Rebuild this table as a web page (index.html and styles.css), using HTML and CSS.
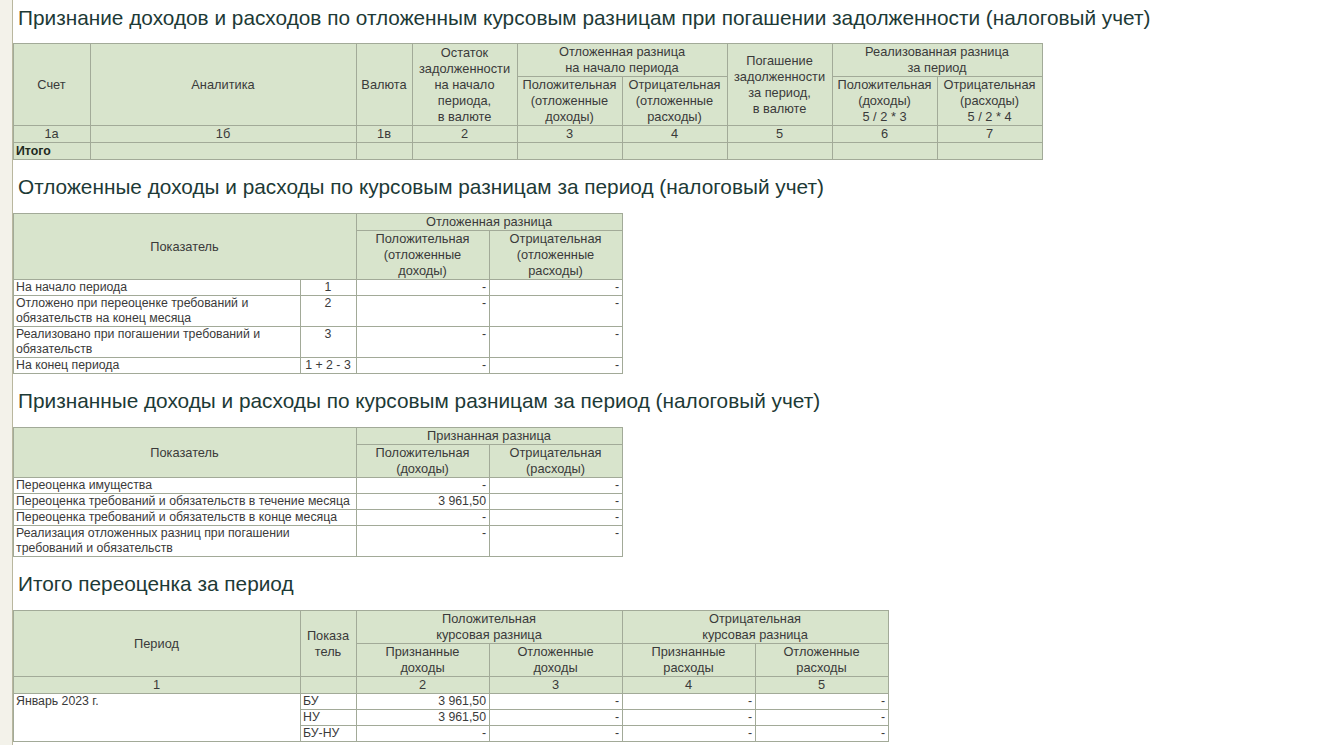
FILE: index.html
```html
<!DOCTYPE html>
<html lang="ru">
<head>
<meta charset="utf-8">
<title>Курсовые разницы</title>
<link rel="stylesheet" href="styles.css">
</head>
<body>
<div class="page">
  <h2 class="title first">Признание доходов и расходов по отложенным курсовым разницам при погашении задолженности (налоговый учет)</h2>
  <table class="grid t1">
    <colgroup>
      <col class="w77"><col class="w266"><col class="w56"><col class="w105"><col class="w105"><col class="w105"><col class="w105"><col class="w105"><col class="w105">
    </colgroup>
    <thead>
      <tr>
        <th rowspan="2">Счет</th>
        <th rowspan="2">Аналитика</th>
        <th rowspan="2">Валюта</th>
        <th rowspan="2">Остаток<br>задолженности<br>на начало<br>периода,<br>в валюте</th>
        <th colspan="2">Отложенная разница<br>на начало периода</th>
        <th rowspan="2">Погашение<br>задолженности<br>за период,<br>в валюте</th>
        <th colspan="2">Реализованная разница<br>за период</th>
      </tr>
      <tr>
        <th>Положительная<br>(отложенные<br>доходы)</th>
        <th>Отрицательная<br>(отложенные<br>расходы)</th>
        <th>Положительная<br>(доходы)<br>5 / 2 * 3</th>
        <th>Отрицательная<br>(расходы)<br>5 / 2 * 4</th>
      </tr>
      <tr class="nums">
        <th>1а</th><th>1б</th><th>1в</th><th>2</th><th>3</th><th>4</th><th>5</th><th>6</th><th>7</th>
      </tr>
      <tr class="total">
        <th>Итого</th><th></th><th></th><th></th><th></th><th></th><th></th><th></th><th></th>
      </tr>
    </thead>
  </table>

  <h2 class="title">Отложенные доходы и расходы по курсовым разницам за период (налоговый учет)</h2>
  <table class="grid t2">
    <colgroup>
      <col class="w287"><col class="w56"><col class="w133"><col class="w133">
    </colgroup>
    <thead>
      <tr>
        <th rowspan="2" colspan="2">Показатель</th>
        <th colspan="2">Отложенная разница</th>
      </tr>
      <tr>
        <th>Положительная<br>(отложенные<br>доходы)</th>
        <th>Отрицательная<br>(отложенные<br>расходы)</th>
      </tr>
    </thead>
    <tbody>
      <tr><td>На начало периода</td><td class="c">1</td><td class="r">-</td><td class="r">-</td></tr>
      <tr><td>Отложено при переоценке требований и обязательств на конец месяца</td><td class="c">2</td><td class="r">-</td><td class="r">-</td></tr>
      <tr><td>Реализовано при погашении требований и обязательств</td><td class="c">3</td><td class="r">-</td><td class="r">-</td></tr>
      <tr><td>На конец периода</td><td class="c">1 + 2 - 3</td><td class="r">-</td><td class="r">-</td></tr>
    </tbody>
  </table>

  <h2 class="title">Признанные доходы и расходы по курсовым разницам за период (налоговый учет)</h2>
  <table class="grid t3">
    <colgroup>
      <col class="w343"><col class="w133"><col class="w133">
    </colgroup>
    <thead>
      <tr>
        <th rowspan="2">Показатель</th>
        <th colspan="2">Признанная разница</th>
      </tr>
      <tr>
        <th>Положительная<br>(доходы)</th>
        <th>Отрицательная<br>(расходы)</th>
      </tr>
    </thead>
    <tbody>
      <tr><td>Переоценка имущества</td><td class="r">-</td><td class="r">-</td></tr>
      <tr><td>Переоценка требований и обязательств в течение месяца</td><td class="r">3 961,50</td><td class="r">-</td></tr>
      <tr><td>Переоценка требований и обязательств в конце месяца</td><td class="r">-</td><td class="r">-</td></tr>
      <tr><td>Реализация отложенных разниц при погашении<br>требований и обязательств</td><td class="r">-</td><td class="r">-</td></tr>
    </tbody>
  </table>

  <h2 class="title">Итого переоценка за период</h2>
  <table class="grid t4">
    <colgroup>
      <col class="w287"><col class="w56"><col class="w133"><col class="w133"><col class="w133"><col class="w133">
    </colgroup>
    <thead>
      <tr>
        <th rowspan="2">Период</th>
        <th rowspan="2">Показа<br>тель</th>
        <th colspan="2">Положительная<br>курсовая разница</th>
        <th colspan="2">Отрицательная<br>курсовая разница</th>
      </tr>
      <tr>
        <th>Признанные<br>доходы</th>
        <th>Отложенные<br>доходы</th>
        <th>Признанные<br>расходы</th>
        <th>Отложенные<br>расходы</th>
      </tr>
      <tr class="nums">
        <th>1</th><th></th><th>2</th><th>3</th><th>4</th><th>5</th>
      </tr>
    </thead>
    <tbody>
      <tr><td rowspan="3">Январь 2023 г.</td><td>БУ</td><td class="r">3 961,50</td><td class="r">-</td><td class="r">-</td><td class="r">-</td></tr>
      <tr><td>НУ</td><td class="r">3 961,50</td><td class="r">-</td><td class="r">-</td><td class="r">-</td></tr>
      <tr><td>БУ-НУ</td><td class="r">-</td><td class="r">-</td><td class="r">-</td><td class="r">-</td></tr>
    </tbody>
  </table>
</div>
</body>
</html>
```

FILE: styles.css
```css
html, body {
  margin: 0;
  padding: 0;
  height: 100%;
}
body {
  background: #f3f2ea;
  font-family: "Liberation Sans", Arial, sans-serif;
  color: #3a3a3a;
}
.page {
  margin-left: 12px;
  border-left: 1px solid #b9b79f;
  background: #ffffff;
  min-height: 100%;
  padding-top: 6px;
  box-sizing: border-box;
  overflow: hidden;
}
.title {
  margin: 15px 0 14px 0;
  padding-left: 5px;
  font-weight: normal;
  font-size: 20.8px;
  line-height: 24px;
  color: #1d3a36;
  white-space: nowrap;
}
.title.first {
  margin-top: 0;
  margin-bottom: 13px;
}
.grid {
  border-collapse: collapse;
  table-layout: fixed;
  font-size: 12.3px;
  line-height: 15px;
}
.grid th, .grid td {
  border: 1px solid #a2aa98;
  padding: 0 3px 0 2px;
  overflow: hidden;
}
.grid th {
  background: #d8e4cc;
  font-weight: normal;
  font-size: 12.8px;
  line-height: 16px;
  text-align: center;
  vertical-align: middle;
  color: #3a3a3a;
}
.grid td {
  vertical-align: top;
  text-align: left;
  background: #ffffff;
}
.grid td.c { text-align: center; }
.grid td.r { text-align: right; }
.grid tr.total th {
  text-align: left;
  font-weight: bold;
  font-size: 12.3px;
  color: #1e2a1e;
}
.t1 { width: 1030px; }
.t2 { width: 610px; }
.t3 { width: 610px; }
.t4 { width: 876px; }
.w77 { width: 77px; }
.w266 { width: 266px; }
.w56 { width: 56px; }
.w105 { width: 105px; }
.w287 { width: 287px; }
.w133 { width: 133px; }
.w343 { width: 343px; }
```
